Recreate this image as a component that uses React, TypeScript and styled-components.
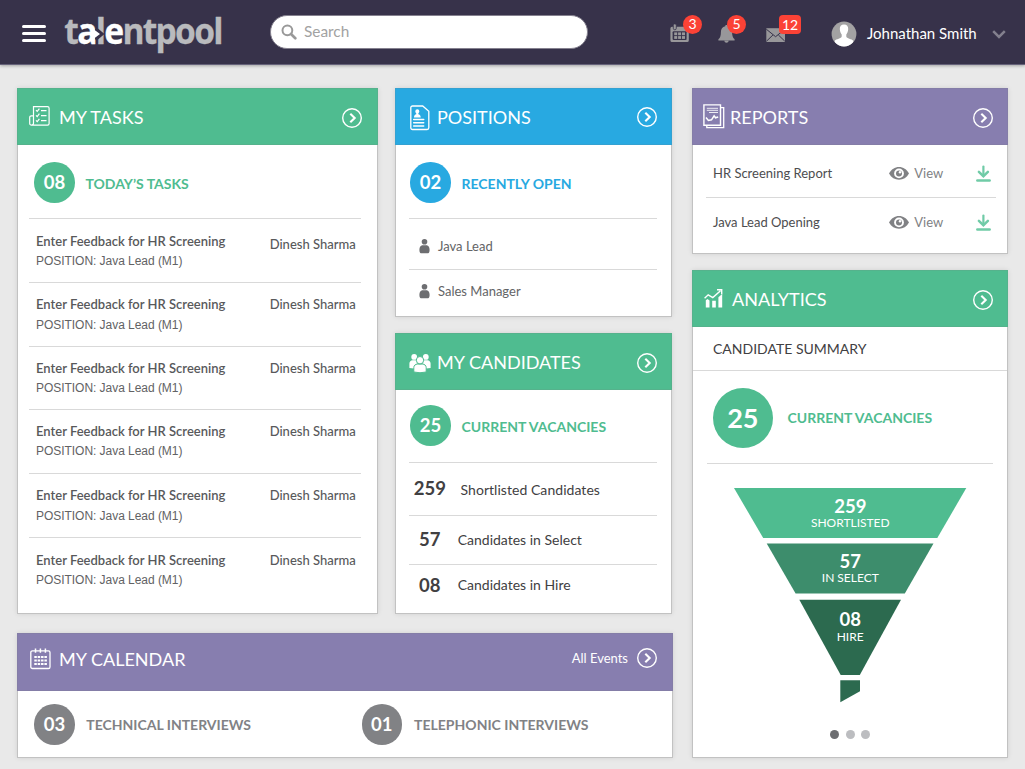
import React from "react";
import styled, { createGlobalStyle } from "styled-components";

const GREEN = "#4fbc90";
const BLUE = "#28a9e1";
const PURPLE = "#877eaf";
const GREY = "#818285";
const LINE = "#d9d9d9";

const GlobalStyle = createGlobalStyle`
  * { box-sizing: border-box; }
  body {
    margin: 0;
    background: #e9e9e9;
    font-family: Lato, "Liberation Sans", sans-serif;
    color: #58595b;
    overflow: hidden;
  }
  svg { display: block; flex: none; }
`;

const Page = styled.div`
  width: 1025px;
  height: 769px;
  display: flex;
  flex-direction: column;
`;

/* ---------- top bar ---------- */

const TopBar = styled.header`
  height: 65px;
  flex: none;
  display: flex;
  align-items: flex-start;
  background: #37324a;
  border-bottom: 1px solid #66627a;
  box-shadow: 0 1px 3px rgba(0, 0, 0, 0.3);
`;

const MenuButton = styled.div`
  display: flex;
  flex-direction: column;
  gap: 4.2px;
  width: 24px;
  margin: 25px 0 0 22px;
`;

const MenuLine = styled.span`
  height: 2.9px;
  border-radius: 2px;
  background: #fff;
`;

const Brand = styled.svg`
  margin: 0 0 0 14px;
`;

const SearchBox = styled.div`
  display: flex;
  align-items: center;
  width: 318px;
  height: 34px;
  margin: 15px 0 0 26px;
  padding: 0 0 1px 10px;
  border: 1px solid #85818f;
  border-radius: 17px;
  background: #fff;
`;

const SearchHint = styled.span`
  margin-left: 7px;
  font-size: 15.4px;
  line-height: 19px;
  padding-bottom: 1px;
  color: #a2a2a2;
`;

const Notices = styled.div`
  display: flex;
  margin-left: 82px;
`;

const Notice = styled.div<{ $gap?: number; $top: number }>`
  position: relative;
  margin: ${(p) => p.$top}px 0 0 ${(p) => p.$gap ?? 0}px;
`;

const Count = styled.span<{ $left: number; $top: number; $wide?: boolean }>`
  position: absolute;
  left: ${(p) => p.$left}px;
  top: ${(p) => p.$top}px;
  width: ${(p) => (p.$wide ? 22 : 19)}px;
  height: 19px;
  border-radius: ${(p) => (p.$wide ? 4 : 10)}px;
  background: #fb4236;
  color: #fff;
  font-size: 14px;
  line-height: ${(p) => (p.$wide ? 20 : 18)}px;
  text-align: center;
`;

const Account = styled.div`
  display: flex;
  align-items: center;
  height: 26px;
  margin: 20.5px 0 0 45px;
`;

const AccountName = styled.span`
  width: 135px;
  padding: 0 0 1px 10px;
  font-size: 15px;
  color: #fff;
  white-space: nowrap;
`;

/* ---------- cards ---------- */

const Board = styled.main`
  display: flex;
  gap: 19px;
  padding: 23px 17px 0;
`;

const LeftSide = styled.div`
  width: 656px;
  display: flex;
  flex-direction: column;
  gap: 19px;
`;

const TopRow = styled.div`
  display: flex;
  gap: 17px;
`;

const Stack = styled.div<{ $w: number }>`
  width: ${(p) => p.$w}px;
  display: flex;
  flex-direction: column;
  gap: 16px;
`;

const Card = styled.section<{ $w?: number; $h: number }>`
  width: ${(p) => (p.$w ? `${p.$w}px` : "100%")};
  height: ${(p) => p.$h}px;
  border: 1px solid #c2c2c2;
  background: #fff;
  box-shadow: 0 0 5px rgba(0, 0, 0, 0.1);
`;

const CardHeader = styled.div<{ $bg: string; $pad: number; $right?: number; $lift?: number; $h?: number }>`
  display: flex;
  align-items: center;
  height: ${(p) => p.$h ?? 57}px;
  margin: -1px -1px 0;
  padding: 0 ${(p) => p.$right ?? 14}px ${(p) => p.$lift ?? 0}px ${(p) => p.$pad}px;
  background: ${(p) => p.$bg};
  box-shadow: inset 0 0 0 1px rgba(120, 120, 120, 0.15);
`;

const HeaderIcon = styled.div<{ $w: number; $lift?: number }>`
  width: ${(p) => p.$w}px;
  flex: none;
  margin-bottom: ${(p) => p.$lift ?? 0}px;
`;

const CardTitle = styled.h2`
  margin: 1px 0 0;
  flex: 1;
  font-size: 18.05px;
  font-weight: 400;
  line-height: 22px;
  color: #fff;
  white-space: nowrap;
`;

const HeaderLink = styled.span`
  margin: 0 8px 2px 0;
  font-size: 13px;
  color: #fff;
`;

const ArrowWrap = styled.div<{ $drop: number }>`
  margin-top: ${(p) => p.$drop}px;
`;

const Body = styled.div<{ $l: number; $r: number }>`
  padding: 0 ${(p) => p.$r}px 0 ${(p) => p.$l}px;
`;

const Summary = styled.div<{ $h: number; $top: number; $pad: number; $line?: boolean }>`
  display: flex;
  align-items: flex-start;
  height: ${(p) => p.$h}px;
  padding: ${(p) => p.$top}px 0 0 ${(p) => p.$pad}px;
  border-bottom: ${(p) => (p.$line === false ? "0" : `1px solid ${LINE}`)};
`;

const SummaryItem = styled.div<{ $w?: number; $color: string }>`
  display: flex;
  align-items: center;
  width: ${(p) => (p.$w ? `${p.$w}px` : "auto")};
  color: ${(p) => p.$color};
`;

const Badge = styled.div<{ $bg: string; $large?: boolean }>`
  width: ${(p) => (p.$large ? 60.5 : 40.5)}px;
  height: ${(p) => (p.$large ? 60.5 : 40.5)}px;
  flex: none;
  border-radius: 50%;
  background: ${(p) => p.$bg};
  color: #fff;
  font-size: ${(p) => (p.$large ? 27 : 18.5)}px;
  font-weight: 700;
  line-height: ${(p) => (p.$large ? 60 : 40)}px;
  text-align: center;
`;

const SummaryLabel = styled.span<{ $gap: number; $drop?: number }>`
  margin: ${(p) => p.$drop ?? 0}px 0 0 ${(p) => p.$gap}px;
  font-size: 14px;
  font-weight: 700;
  line-height: 18px;
  white-space: nowrap;
`;

/* ---------- task rows ---------- */

const TaskRow = styled.div<{ $h: number; $top: number }>`
  display: grid;
  grid-template-columns: 233.7px 1fr;
  height: ${(p) => p.$h}px;
  padding: ${(p) => p.$top}px 0 0 7px;
  border-bottom: 1px solid ${LINE};
  &:last-child { border-bottom: 0; }
`;

const TaskName = styled.div`
  font-size: 13px;
  font-weight: 600;
  line-height: 19px;
`;

const TaskPosition = styled.div<{ $gap: number }>`
  margin-top: ${(p) => p.$gap}px;
  font-family: "Liberation Sans", sans-serif;
  font-size: 12px;
  letter-spacing: -0.04px;
  line-height: 19px;
  color: #626264;
`;

const Assignee = styled.div<{ $drop: number }>`
  padding-top: ${(p) => p.$drop}px;
  font-size: 13px;
  font-weight: 500;
  line-height: 19px;
  white-space: nowrap;
`;

/* ---------- simple rows ---------- */

const PositionRow = styled.div<{ $h: number; $top: number }>`
  display: flex;
  align-items: flex-start;
  gap: 8px;
  height: ${(p) => p.$h}px;
  padding: ${(p) => p.$top}px 0 0 10px;
  border-bottom: 1px solid ${LINE};
  font-size: 13px;
  line-height: 16px;
  color: #636466;
  &:last-child { border-bottom: 0; }
`;

const CandidateRow = styled.div<{ $h: number; $top: number; $drop: number }>`
  display: flex;
  height: ${(p) => p.$h}px;
  padding-top: ${(p) => p.$top}px;
  border-bottom: 1px solid ${LINE};
  color: #414042;
  &:last-child { border-bottom: 0; }
  & > span:last-child { margin-top: ${(p) => p.$drop}px; }
`;

const CandidateCount = styled.span<{ $w: number; $pad: number }>`
  width: ${(p) => p.$w}px;
  padding-left: ${(p) => p.$pad}px;
  font-size: 18.5px;
  font-weight: 700;
  line-height: 22px;
`;

const CandidateLabel = styled.span<{ $wide?: boolean }>`
  font-size: 14px;
  letter-spacing: ${(p) => (p.$wide ? "0.05px" : "0")};
  line-height: 22px;
`;

const ReportRow = styled.div<{ $h: number; $top: number }>`
  display: flex;
  align-items: flex-start;
  height: ${(p) => p.$h}px;
  padding: ${(p) => p.$top}px 5px 0 7px;
  border-bottom: 1px solid ${LINE};
  font-size: 13px;
  line-height: 16px;
  color: #4d4d4f;
  &:last-child { border-bottom: 0; }
`;

const ReportName = styled.span`
  width: 176.3px;
`;

const ViewLink = styled.span`
  display: flex;
  width: 86.7px;
  gap: 5px;
  color: #808184;
`;

const SectionName = styled.div`
  height: 44px;
  padding: 11px 0 0 20px;
  border-bottom: 1px solid ${LINE};
  font-size: 14px;
  line-height: 22px;
  color: #414042;
`;

const FunnelWrap = styled.div`
  padding: 24px 0 0 40px;
`;

const Dots = styled.div`
  display: flex;
  justify-content: center;
  gap: 6.5px;
  margin-top: 26.5px;
`;

const Dot = styled.span<{ $on?: boolean }>`
  width: 9px;
  height: 9px;
  border-radius: 50%;
  background: ${(p) => (p.$on ? "#6d6e71" : "#bcbdc0")};
`;

/* ---------- icons ---------- */

const LogoText = styled.text`
  font-family: "Open Sans", "Noto Sans", sans-serif;
  font-size: 35px;
  font-weight: 700;
  letter-spacing: -1.8px;
  fill: #b9babd;
  stroke: #b9babd;
  stroke-width: 0.3px;
`;

const LogoAccent = styled.tspan`
  fill: #fff;
  stroke: #fff;
`;

const Logo = () => (
  <Brand width="184" height="64" viewBox="60 0 184 64">
    <LogoText x="64.300" y="44" textLength="157.500" lengthAdjust="spacingAndGlyphs">
      t<LogoAccent>a</LogoAccent>l<LogoAccent>e</LogoAccent>ntpool
    </LogoText>
    <path d="M95 28.500H98L104.500 34 98 39.500H95Z" fill="#37324a" />
    <path d="M90 32.200h4v-2.700l6 4.500-6 4.500v-2.700H90z" fill="#fff" />
  </Brand>
);

const SearchIcon = () => (
  <svg width="16" height="16" viewBox="0 0 16 16" fill="none" stroke="#999">
    <circle cx="6.4" cy="6.3" r="4.900" strokeWidth="2" />
    <path d="M10 10l4.300 4.200" strokeWidth="2.700" strokeLinecap="round" />
  </svg>
);

const NoticeCalendar = () => (
  <svg width="20" height="20" viewBox="0 0 20 20">
    <path d="M2 2.800H17a1.800 1.800 0 0 1 1.800 1.800V16.500A1.600 1.600 0 0 1 17.200 18H2A1.600 1.600 0 0 1 .4 16.500V4.400A1.600 1.600 0 0 1 2 2.800Z" fill="#98979a" />
    <rect x="3.300" y="-.2" width="3" height="6" rx="1.500" fill="#98979a" stroke="#37324a" strokeWidth=".8" />
    <rect x="2.600" y="7.300" width="14" height="8.800" rx="1" fill="#37324a" />
    <g fill="#98979a">
      {[4.2, 8.1, 12].map((x) => [8.4, 12.1].map((y) => <rect key={`${x}-${y}`} x={x} y={y} width="3" height="2.800" />))}
    </g>
  </svg>
);

const NoticeBell = () => (
  <svg width="17" height="19" viewBox="0 0 17 19" fill="#98979a">
    <path d="M8.500 0c.8 0 1.300.5 1.300 1.300 2.900.7 4.300 2.900 4.300 5.700 0 3.500.5 5.500 2.500 7.300v1.200H.4v-1.200C2.400 12.500 2.900 10.500 2.900 7c0-2.800 1.400-5 4.300-5.700C7.200.5 7.700 0 8.500 0ZM6.300 15.800h4.400c-.2 1.200-1 2-2.200 2s-2-.8-2.200-2Z" />
  </svg>
);

const NoticeMail = () => (
  <svg width="20" height="15" viewBox="0 0 20 15">
    <rect x=".3" y=".2" width="18.700" height="13.800" fill="#98979a" />
    <path d="M.3 1.200 9.600 8.700 19 1.200M.5 13.200 7 6.900M18.800 13.200 12.300 6.900" fill="none" stroke="#37324a" strokeWidth="1" />
  </svg>
);

const Avatar = () => (
  <svg width="26" height="26" viewBox="0 0 26 26">
    <defs>
      <clipPath id="face">
        <circle cx="13" cy="13" r="12.400" />
      </clipPath>
    </defs>
    <circle cx="13" cy="13" r="12.400" fill="#a3a2a3" />
    <g clipPath="url(#face)" fill="#fff">
      <path d="M13 3.500c3 0 4.300 2 4.200 4.500-.1 2.400-1 4.200-1.900 5.400v2c.2 2.400 5.500 2 7.200 4.600L20 26H6l-2.500-6c1.700-2.600 7-2.200 7.200-4.600v-2C9.800 12.200 8.900 10.400 8.800 8 8.700 5.500 10 3.500 13 3.500Z" />
    </g>
  </svg>
);

const ChevronDown = () => (
  <svg width="14" height="10" viewBox="0 0 14 10" fill="none" stroke="#83808e" strokeWidth="2.500">
    <path d="M1.200 2.200 7 8l5.800-5.800" />
  </svg>
);

const Arrow = ({ drop = 2 }: { drop?: number }) => (
  <ArrowWrap $drop={drop}>
    <svg width="22" height="22" viewBox="0 0 22 22" fill="none" stroke="#fff">
      <circle cx="11" cy="11" r="9.300" strokeWidth="1.400" />
      <path d="M9.300 6.700 13.700 11l-4.400 4.300" strokeWidth="2.100" />
    </svg>
  </ArrowWrap>
);

const TasksIcon = () => (
  <svg width="21" height="20" viewBox="0 0 21 20" fill="none" stroke="#fff" strokeWidth="1.200">
    <path d="M4.500 16V.7H18.500a1.600 1.600 0 0 1 1.600 1.600V17.600A1.600 1.600 0 0 1 18.500 19.200H2.500A1.800 1.800 0 0 1 .7 17.400V11.400A1.600 1.600 0 0 1 2.300 9.800H4.500M4.500 9.800V17A2 2 0 0 1 2.600 19.200" />
    <path d="M7 4.200l1.200 1.200 2.200-2.800M7 9.300l1.200 1.200 2.200-2.800M7 14.400l1.200 1.200 2.200-2.800M12 4.600h5.500M12 9.700h5.500M12 14.700h5.500" />
  </svg>
);

const ResumeIcon = () => (
  <svg width="20" height="26" viewBox="0 0 20 26">
    <path d="M2.500 1H12.700L18.800 6.300V22.800A1.700 1.700 0 0 1 17.100 24.500H2.500A1.700 1.700 0 0 1 .8 22.800V2.700A1.700 1.700 0 0 1 2.500 1Z" fill="none" stroke="#fff" strokeWidth="1.300" />
    <path d="M7.300 4.200a2 2 0 0 1 2 2c0 1-.5 1.800-1 2.200v.8c1.300.4 2.400 1 2.400 3.300H4c0-2.300 1-2.900 2.300-3.300v-.8c-.5-.4-1-1.200-1-2.200a2 2 0 0 1 2-2Z" fill="#fff" />
    <path d="M3.700 14.400h10M3.700 17.700h10M3.700 21h10" stroke="#fff" strokeWidth="1.500" strokeLinecap="round" />
  </svg>
);

const PeopleIcon = () => (
  <svg width="22" height="20" viewBox="0 0 22 20" fill="#fff">
    <circle cx="5.200" cy="3.900" r="2.900" />
    <circle cx="16.800" cy="3.900" r="2.900" />
    <path d="M.4 15V10.500C.4 8.500 1.800 7.200 3.600 7.200H7.200L8.800 10 5.500 12.500 5 15.500ZM21.600 15V10.500c0-2-1.400-3.300-3.200-3.300H14.800L13.200 10l3.300 2.500.5 3Z" />
    <g stroke={GREEN} strokeWidth="1">
      <path d="M4.800 19V14.700c0-2.300 1.700-3.600 3.800-3.600h4.800c2.100 0 3.800 1.300 3.800 3.600V19Q11 20.500 4.800 19Z" />
      <circle cx="11" cy="7.200" r="3.700" />
    </g>
  </svg>
);

const ReportIcon = () => (
  <svg width="22" height="25" viewBox="0 0 22 25" fill="none" stroke="#fff">
    <path d="M.9.900H17.500V21.200H.9Z" strokeWidth="1.400" />
    <path d="M18 3.700H20.700V23.700H3.800V21.200" strokeWidth="1.300" />
    <path d="M3.800 4.300h11.200M3.800 6.300h11.200M6 8.500h9" strokeWidth="1" opacity=".85" />
    <path d="M3 13.500l2.400 3 3.100-.7 2.600-4 1.400 2 2.700-.8" strokeWidth="1.500" />
  </svg>
);

const AnalyticsIcon = () => (
  <svg width="20" height="21" viewBox="0 0 20 21">
    <path d="M1.800 12.300 3.500 11 5.500 12.500V19.500H1.800ZM8.200 12.800h3.600V19.500H8.200ZM14.400 9.300 18.200 6V19.500H14.400Z" fill="#fff" />
    <path d="M.6 10.300 4.200 6.800 8.800 9.600 16.500 2.800M13 1.700H17.700V6.300" fill="none" stroke="#fff" strokeWidth="1.400" />
  </svg>
);

const CalendarIcon = () => (
  <svg width="21" height="22" viewBox="0 0 21 22" fill="none" stroke="#fff">
    <rect x=".8" y="2.800" width="19.200" height="17.700" rx="1.600" strokeWidth="1.300" />
    <path d="M5.500.5v4.200M10.400.5v4.200M15.400.5v4.200" strokeWidth="1.500" />
    <path d="M4.300 9h12.600M4.300 12.500h12.600M4.300 16h12.600" strokeWidth="2.200" strokeDasharray="2.500 .87" />
  </svg>
);

const PersonIcon = () => (
  <svg width="11" height="16" viewBox="0 0 11 16" fill="#6d6e71">
    <circle cx="5.500" cy="3.700" r="2.800" />
    <path d="M3 7.200h5c1.700.6 2.600 2.200 2.600 4.600 0 2.400-.6 3.400-1.500 3.400H1.900C1 15.200.4 14.200.4 11.800c0-2.400.9-4 2.600-4.600Z" />
  </svg>
);

const EyeIcon = () => (
  <svg width="20" height="16" viewBox="0 0 20 16">
    <path d="M0 8.500C2.300 4.300 5.800 2 10 2s7.700 2.300 10 6.500c-2.300 4.200-5.800 6.200-10 6.200S2.300 12.700 0 8.500Z" fill="#808184" />
    <circle cx="10" cy="8.400" r="4.900" fill="#fff" />
    <circle cx="10" cy="8.400" r="3" fill="#808184" />
    <circle cx="11" cy="7.300" r="1.200" fill="#fff" />
  </svg>
);

const DownloadIcon = () => (
  <svg width="15" height="17" viewBox="0 0 15 17" fill="none" stroke="#70cba7">
    <path d="M7.400 1.500V10.500" strokeWidth="2.200" strokeLinecap="round" />
    <path d="M2.900 6.900 7.400 11.200 11.900 6.900" strokeWidth="2.500" strokeLinecap="round" />
    <path d="M1.300 15.500H13.700" strokeWidth="2.400" strokeLinecap="round" />
  </svg>
);

const FunnelText = styled.text<{ $small?: boolean }>`
  fill: #fff;
  font-size: ${(p) => (p.$small ? 12 : 18.5)}px;
  font-weight: ${(p) => (p.$small ? 400 : 700)};
  text-anchor: middle;
`;

const Funnel = () => (
  <svg width="234" height="215" viewBox="733 488 234 215">
    <path d="M734 488H966.300L937.300 538H763.200Z" fill={GREEN} />
    <path d="M766.700 543.500H933.500L904.800 593.500H795.600Z" fill="#3d8d6c" />
    <path d="M799.300 599.700H901L859.800 675H840.700Z" fill="#2c6a4f" />
    <path d="M840.300 680.300H860V691.200L840.300 702.200Z" fill="#2c6a4f" />
    <FunnelText x="850.300" y="513">259</FunnelText>
    <FunnelText $small x="850.300" y="527.300">SHORTLISTED</FunnelText>
    <FunnelText x="850.200" y="568">57</FunnelText>
    <FunnelText $small x="850.300" y="582.300">IN SELECT</FunnelText>
    <FunnelText x="850.200" y="626">08</FunnelText>
    <FunnelText $small x="850.200" y="641.300">HIRE</FunnelText>
  </svg>
);

/* ---------- data ---------- */

const tasks = [
  { h: 64, top: 13, drop: 3, gap: 1 },
  { h: 64, top: 12, drop: 0, gap: 2 },
  { h: 63, top: 12, drop: 0, gap: 1 },
  { h: 64, top: 12, drop: 0, gap: 1 },
  { h: 64, top: 12, drop: 0, gap: 2 },
  { h: 64, top: 13, drop: 0, gap: 1 },
];

const candidates = [
  { n: "259", label: "Shortlisted Candidates", h: 53, top: 14, drop: 2, w: 51.5, pad: 4.7 },
  { n: "57", label: "Candidates in Select", h: 49, top: 12, drop: 1, w: 48.7, pad: 10 },
  { n: "08", label: "Candidates in Hire", h: 48, top: 9, drop: 0, w: 48.7, pad: 10 },
];

const reports = [
  { name: "HR Screening Report", h: 53, top: 20 },
  { name: "Java Lead Opening", h: 54, top: 16 },
];

export default function App() {
  return (
    <Page>
      <GlobalStyle />
      <TopBar>
        <MenuButton>
          <MenuLine />
          <MenuLine />
          <MenuLine />
        </MenuButton>
        <Logo />
        <SearchBox>
          <SearchIcon />
          <SearchHint>Search</SearchHint>
        </SearchBox>
        <Notices>
          <Notice $top={24}>
            <NoticeCalendar />
            <Count $left={13} $top={-9}>3</Count>
          </Notice>
          <Notice $top={25} $gap={28}>
            <NoticeBell />
            <Count $left={9} $top={-10}>5</Count>
          </Notice>
          <Notice $top={28} $gap={31}>
            <NoticeMail />
            <Count $left={13} $top={-13} $wide>12</Count>
          </Notice>
        </Notices>
        <Account>
          <Avatar />
          <AccountName>Johnathan Smith</AccountName>
          <ChevronDown />
        </Account>
      </TopBar>

      <Board>
        <LeftSide>
          <TopRow>
            <Card $w={361} $h={526}>
              <CardHeader $bg={GREEN} $pad={12} $right={15}>
                <HeaderIcon $w={30} $lift={1}><TasksIcon /></HeaderIcon>
                <CardTitle>MY TASKS</CardTitle>
                <Arrow drop={3} />
              </CardHeader>
              <Body $l={11} $r={16}>
                <Summary $h={74} $top={17} $pad={5.3}>
                  <SummaryItem $color={GREEN}>
                    <Badge $bg={GREEN}>08</Badge>
                    <SummaryLabel $gap={10.7} $drop={3}>TODAY’S TASKS</SummaryLabel>
                  </SummaryItem>
                </Summary>
                {tasks.map((t, i) => (
                  <TaskRow key={i} $h={t.h} $top={t.top}>
                    <div>
                      <TaskName>Enter Feedback for HR Screening</TaskName>
                      <TaskPosition $gap={t.gap}>POSITION: Java Lead (M1)</TaskPosition>
                    </div>
                    <Assignee $drop={t.drop}>Dinesh Sharma</Assignee>
                  </TaskRow>
                ))}
              </Body>
            </Card>

            <Stack $w={277}>
              <Card $h={229}>
                <CardHeader $bg={BLUE} $pad={15}>
                  <HeaderIcon $w={27} $lift={-3}><ResumeIcon /></HeaderIcon>
                  <CardTitle>POSITIONS</CardTitle>
                  <Arrow drop={1} />
                </CardHeader>
                <Body $l={13} $r={14}>
                  <Summary $h={74} $top={17} $pad={1.3}>
                    <SummaryItem $color={BLUE}>
                      <Badge $bg={BLUE}>02</Badge>
                      <SummaryLabel $gap={10.7} $drop={3}>RECENTLY OPEN</SummaryLabel>
                    </SummaryItem>
                  </Summary>
                  <PositionRow $h={51} $top={19}><PersonIcon />Java Lead</PositionRow>
                  <PositionRow $h={46} $top={13}><PersonIcon />Sales Manager</PositionRow>
                </Body>
              </Card>

              <Card $h={281}>
                <CardHeader $bg={GREEN} $pad={14}>
                  <HeaderIcon $w={28} $lift={-2}><PeopleIcon /></HeaderIcon>
                  <CardTitle>MY CANDIDATES</CardTitle>
                  <Arrow />
                </CardHeader>
                <Body $l={13} $r={14}>
                  <Summary $h={73} $top={15} $pad={1.3}>
                    <SummaryItem $color={GREEN}>
                      <Badge $bg={GREEN}>25</Badge>
                      <SummaryLabel $gap={10.7} $drop={3}>CURRENT VACANCIES</SummaryLabel>
                    </SummaryItem>
                  </Summary>
                  {candidates.map((c) => (
                    <CandidateRow key={c.n} $h={c.h} $top={c.top} $drop={c.drop}>
                      <CandidateCount $w={c.w} $pad={c.pad}>{c.n}</CandidateCount>
                      <CandidateLabel $wide={c.n === "259"}>{c.label}</CandidateLabel>
                    </CandidateRow>
                  ))}
                </Body>
              </Card>
            </Stack>
          </TopRow>

          <Card $h={125}>
            <CardHeader $bg={PURPLE} $pad={13} $right={15} $lift={7} $h={58}>
              <HeaderIcon $w={29}><CalendarIcon /></HeaderIcon>
              <CardTitle>MY CALENDAR</CardTitle>
              <HeaderLink>All Events</HeaderLink>
              <Arrow drop={-2} />
            </CardHeader>
            <Summary $h={60} $top={13} $pad={16.3} $line={false}>
              <SummaryItem $w={327.3} $color={GREY}>
                <Badge $bg={GREY}>03</Badge>
                <SummaryLabel $gap={11.5} $drop={2}>TECHNICAL INTERVIEWS</SummaryLabel>
              </SummaryItem>
              <SummaryItem $color={GREY}>
                <Badge $bg={GREY}>01</Badge>
                <SummaryLabel $gap={12} $drop={2}>TELEPHONIC INTERVIEWS</SummaryLabel>
              </SummaryItem>
            </Summary>
          </Card>
        </LeftSide>

        <Stack $w={316}>
          <Card $h={166}>
            <CardHeader $bg={PURPLE} $pad={11}>
              <HeaderIcon $w={27} $lift={1}><ReportIcon /></HeaderIcon>
              <CardTitle>REPORTS</CardTitle>
              <Arrow />
            </CardHeader>
            <Body $l={13} $r={11}>
              {reports.map((r) => (
                <ReportRow key={r.name} $h={r.h} $top={r.top}>
                  <ReportName>{r.name}</ReportName>
                  <ViewLink><EyeIcon />View</ViewLink>
                  <DownloadIcon />
                </ReportRow>
              ))}
            </Body>
          </Card>

          <Card $h={488}>
            <CardHeader $bg={GREEN} $pad={12}>
              <HeaderIcon $w={28} $lift={1}><AnalyticsIcon /></HeaderIcon>
              <CardTitle>ANALYTICS</CardTitle>
              <Arrow />
            </CardHeader>
            <SectionName>CANDIDATE SUMMARY</SectionName>
            <Body $l={14} $r={14}>
              <Summary $h={93} $top={16.7} $pad={5.6}>
                <SummaryItem $color={GREEN}>
                  <Badge $large $bg={GREEN}>25</Badge>
                  <SummaryLabel $gap={14.4}>CURRENT VACANCIES</SummaryLabel>
                </SummaryItem>
              </Summary>
            </Body>
            <FunnelWrap><Funnel /></FunnelWrap>
            <Dots>
              <Dot $on />
              <Dot />
              <Dot />
            </Dots>
          </Card>
        </Stack>
      </Board>
    </Page>
  );
}
